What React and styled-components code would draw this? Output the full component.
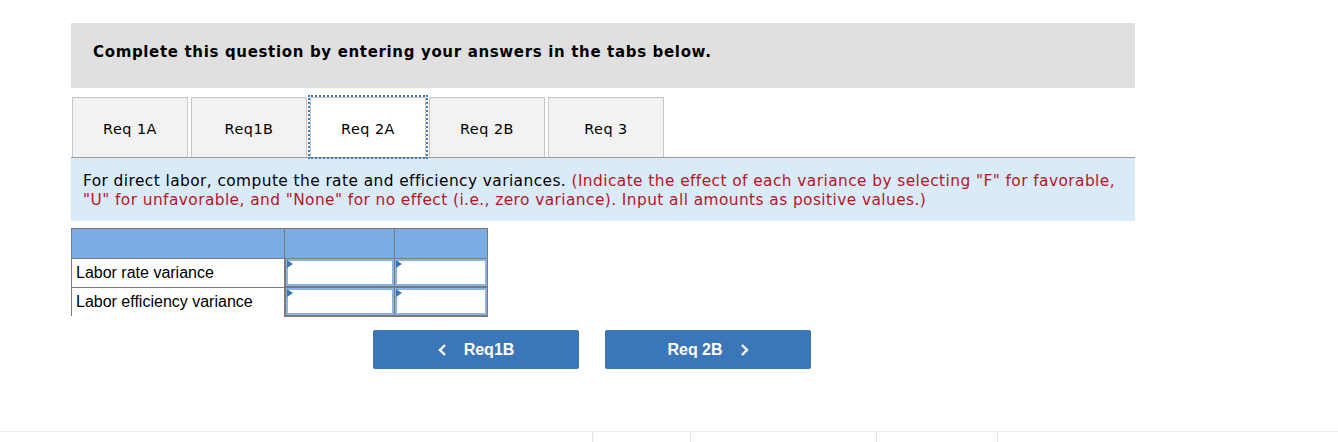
import React from 'react'
import styled, { createGlobalStyle } from 'styled-components'

const GlobalStyle = createGlobalStyle`
  html, body {
    margin: 0;
    padding: 0;
    background: #ffffff;
  }
  body {
    font-family: "DejaVu Sans", Verdana, sans-serif;
  }
`

const Page = styled.div`
  padding: 23px 0 0 71px;
  width: 1064px;
`
const Instructions = styled.div`
  align-items: center;
  background: #e0e0e0;
  box-sizing: border-box;
  color: #000000;
  display: flex;
  font-size: 15px;
  font-weight: bold;
  height: 65px;
  letter-spacing: 0.66px;
  padding: 0 0 8px 22px;
`
const Tabs = styled.div`
  display: flex;
  gap: 3px;
  margin-top: 9px;
  padding-left: 1px;
`
const Tab = styled.button`
  all: unset;
  align-items: center;
  background: ${(p) => (p.$active ? '#ffffff' : '#f2f2f2')};
  border: 1px solid #c6c6c6;
  border-bottom: none;
  box-sizing: border-box;
  color: #000000;
  display: flex;
  font-family: "DejaVu Sans", Verdana, sans-serif;
  font-size: 14.4px;
  height: 60px;
  justify-content: center;
  letter-spacing: 0.5px;
  outline: ${(p) => (p.$active ? '2px dotted #3b78c2' : 'none')};
  outline-offset: 0;
  padding-top: 2px;
  position: relative;
  width: 116px;
  z-index: ${(p) => (p.$active ? 1 : 0)};
`
const Panel = styled.div`
  background: #d9ebf9;
  border-top: 1px solid #9a9a9a;
  box-sizing: border-box;
  color: #000000;
  font-size: 15.4px;
  height: 64px;
  letter-spacing: 0.42px;
  line-height: 19px;
  padding: 14px 12px 0 12px;
`
const Hint = styled.span`
  color: #b8151f;
`
const Grid = styled.table`
  border-collapse: collapse;
  font-family: "Liberation Sans", Arial, sans-serif;
  font-size: 16px;
  margin-top: 7px;
`
const HeadCell = styled.th`
  background: #7aade5;
  border: 1px solid #7a7a7a;
  height: 29px;
  padding: 0;
  width: ${(p) => p.$w}px;
`
const LabelCell = styled.td`
  border: 1px solid #7a7a7a;
  border-bottom: ${(p) => (p.$last ? 'none' : '1px solid #7a7a7a')};
  border-right: 2px solid #7a7a7a;
  color: #000000;
  height: 27px;
  padding: 0 4px;
`
const InputCell = styled.td`
  border: 1px solid #7a7a7a;
  border-bottom: 2px solid #7a7a7a;
  padding: 0;
  position: relative;
`
const Field = styled.input`
  border: 2px solid #8db3e2;
  box-shadow: inset 0 0 0 1px #ffffff;
  box-sizing: border-box;
  display: block;
  height: 27px;
  margin: 0;
  outline: none;
  width: 100%;
`
const Marker = styled.span`
  border-bottom: 4px solid transparent;
  border-left: 6px solid #3a76b9;
  border-top: 4px solid transparent;
  height: 0;
  left: 1px;
  position: absolute;
  top: 1px;
  width: 0;
`
const Nav = styled.div`
  display: flex;
  gap: 26px;
  margin-top: 13px;
  padding-left: 302px;
`
const NavButton = styled.button`
  all: unset;
  align-items: center;
  background: #3b76b9;
  border-radius: 2px;
  box-sizing: border-box;
  color: #ffffff;
  cursor: pointer;
  display: flex;
  font-family: "Liberation Sans", Arial, sans-serif;
  font-size: 16px;
  font-weight: bold;
  gap: 17px;
  height: 39px;
  justify-content: center;
  width: 206px;
`
const Footer = styled.div`
  border-top: 1px solid #ececec;
  display: flex;
  height: 10px;
  margin-top: 62px;
  width: 100%;
`
const Tick = styled.span`
  border-left: 1px solid #e4e4e4;
  margin-left: ${(p) => p.$gap}px;
`

const Chevron = ({ dir }) => (
  <svg width='9' height='14' viewBox='0 0 9 14' fill='none'>
    <path
      d={dir === 'left' ? 'M7 2 L2 7 L7 12' : 'M2 2 L7 7 L2 12'}
      stroke='#ffffff'
      strokeWidth='2.4'
    />
  </svg>
)

const tabs = ['Req 1A', 'Req1B', 'Req 2A', 'Req 2B', 'Req 3']
const rows = ['Labor rate variance', 'Labor efficiency variance']

const App = () => {
  return (
    <>
      <GlobalStyle />
      <Page>
        <Instructions>Complete this question by entering your answers in the tabs below.</Instructions>
        <Tabs>
          {tabs.map((t) => (
            <Tab key={t} $active={t === 'Req 2A'}>
              {t}
            </Tab>
          ))}
        </Tabs>
        <Panel>
          For direct labor, compute the rate and efficiency variances.{' '}
          <Hint>
            (Indicate the effect of each variance by selecting "F" for favorable, "U" for unfavorable,
            and "None" for no effect (i.e., zero variance). Input all amounts as positive values.)
          </Hint>
        </Panel>
        <Grid>
          <thead>
            <tr>
              <HeadCell $w={212} />
              <HeadCell $w={109} />
              <HeadCell $w={92} />
            </tr>
          </thead>
          <tbody>
            {rows.map((r, i) => (
              <tr key={r}>
                <LabelCell $last={i === rows.length - 1}>{r}</LabelCell>
                <InputCell>
                  <Field />
                  <Marker />
                </InputCell>
                <InputCell>
                  <Field />
                  <Marker />
                </InputCell>
              </tr>
            ))}
          </tbody>
        </Grid>
        <Nav>
          <NavButton>
            <Chevron dir='left' />
            Req1B
          </NavButton>
          <NavButton>
            Req 2B
            <Chevron dir='right' />
          </NavButton>
        </Nav>
      </Page>
      <Footer>
        <Tick $gap={592} />
        <Tick $gap={97} />
        <Tick $gap={185} />
        <Tick $gap={120} />
      </Footer>
    </>
  )
}

export default App
